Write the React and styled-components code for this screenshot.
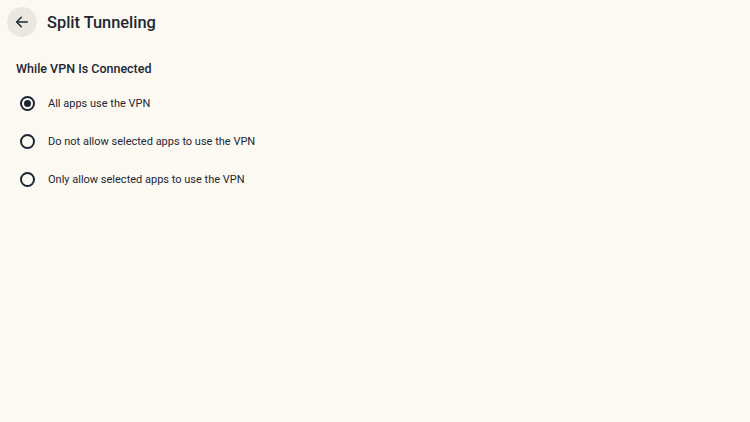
import { useState } from 'react'
import styled, { createGlobalStyle } from 'styled-components'

const options = [
  'All apps use the VPN',
  'Do not allow selected apps to use the VPN',
  'Only allow selected apps to use the VPN',
]

const App = () => {
  const [selected, setSelected] = useState(0)

  return (
    <Page>
      <GlobalStyle />
      <Header>
        <BackButton aria-label="Back">
          <svg width="16" height="16" viewBox="0 0 24 24" fill="none" stroke="#1d2733" strokeWidth="2.2" strokeLinecap="round" strokeLinejoin="round">
            <path d="M20 12H4.5" />
            <path d="M11 5l-7 7 7 7" />
          </svg>
        </BackButton>
        <Title>Split Tunneling</Title>
      </Header>
      <Section>
        <SectionTitle>While VPN Is Connected</SectionTitle>
        <Options>
          {options.map((label, i) => (
            <Option key={label} onClick={() => setSelected(i)}>
              <Radio checked={selected === i} />
              <Label>{label}</Label>
            </Option>
          ))}
        </Options>
      </Section>
    </Page>
  )
}

export default App

const GlobalStyle = createGlobalStyle`
  html, body {
    margin: 0;
    padding: 0;
    background: #fcf9f2;
  }
  body {
    font-family: Roboto, "Noto Sans", sans-serif;
    color: #1d2733;
  }
`

const Page = styled.div`
  width: 750px;
  height: 422px;
  background: #fcf9f2;
  box-sizing: border-box;
  padding: 7px 0 0 7px;
`

const Header = styled.div`
  display: flex;
  align-items: center;
  gap: 10px;
  height: 30px;
`

const BackButton = styled.button`
  width: 30px;
  height: 30px;
  border-radius: 50%;
  border: none;
  padding: 0;
  background: #ebe8e2;
  display: grid;
  place-items: center;
  cursor: pointer;
`

const Title = styled.h1`
  margin: 0;
  font-size: 16.4px;
  font-weight: 500;
  color: #1d2733;
`

const Section = styled.div`
  padding: 24px 0 0 9px;
`

const SectionTitle = styled.h2`
  margin: 0;
  font-size: 12.5px;
  font-weight: 500;
  line-height: 16px;
  color: #1d2733;
`

const Options = styled.div`
  display: flex;
  flex-direction: column;
  margin-top: 7px;
`

const Option = styled.div`
  display: flex;
  align-items: center;
  gap: 13px;
  height: 38px;
  padding-left: 4px;
  cursor: pointer;
`

const Radio = styled.span`
  width: 15px;
  height: 15px;
  border-radius: 50%;
  border: 2px solid #1d2733;
  box-sizing: border-box;
  display: grid;
  place-items: center;
  &::after {
    content: '';
    width: 7px;
    height: 7px;
    border-radius: 50%;
    background: ${p => (p.checked ? '#1d2733' : 'transparent')};
  }
`

const Label = styled.span`
  font-size: 11px;
  color: #1d2733;
`
